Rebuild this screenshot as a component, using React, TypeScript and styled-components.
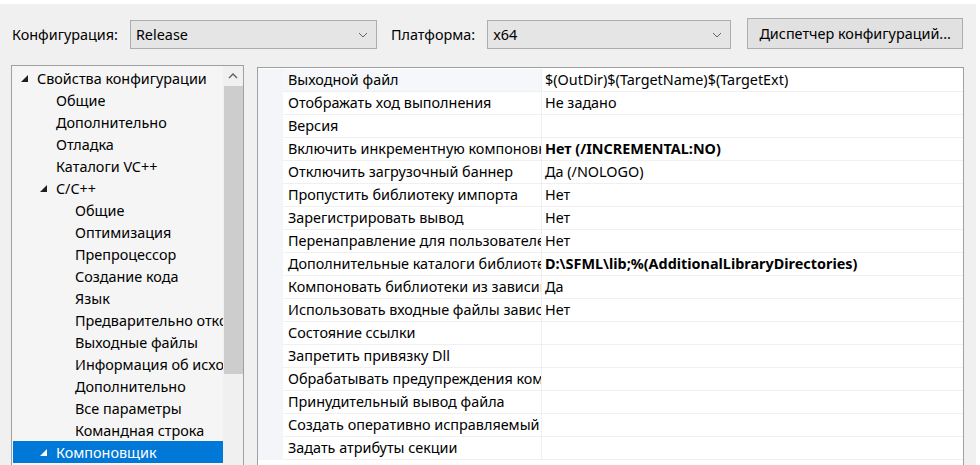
import styled, { createGlobalStyle } from "styled-components";

const GlobalStyle = createGlobalStyle`
  html, body {
    margin: 0;
    padding: 0;
    background: #ffffff;
    overflow: hidden;
  }
  body {
    font-family: "Noto Sans", "Open Sans", sans-serif;
    font-size: 14.4px;
    color: #000;
  }
`;

type TreeItem = { label: string; level: number; expanded?: boolean; selected?: boolean };

const treeItems: TreeItem[] = [
  { label: "Свойства конфигурации", level: 0, expanded: true },
  { label: "Общие", level: 1 },
  { label: "Дополнительно", level: 1 },
  { label: "Отладка", level: 1 },
  { label: "Каталоги VC++", level: 1 },
  { label: "C/C++", level: 1, expanded: true },
  { label: "Общие", level: 2 },
  { label: "Оптимизация", level: 2 },
  { label: "Препроцессор", level: 2 },
  { label: "Создание кода", level: 2 },
  { label: "Язык", level: 2 },
  { label: "Предварительно откомпилированные заголовки", level: 2 },
  { label: "Выходные файлы", level: 2 },
  { label: "Информация об исходных файлах", level: 2 },
  { label: "Дополнительно", level: 2 },
  { label: "Все параметры", level: 2 },
  { label: "Командная строка", level: 2 },
  { label: "Компоновщик", level: 1, expanded: true, selected: true },
];

type Prop = { name: string; value?: string; bold?: boolean };

const props: Prop[] = [
  { name: "Выходной файл", value: "$(OutDir)$(TargetName)$(TargetExt)" },
  { name: "Отображать ход выполнения", value: "Не задано" },
  { name: "Версия" },
  { name: "Включить инкрементную компоновку", value: "Нет (/INCREMENTAL:NO)", bold: true },
  { name: "Отключить загрузочный баннер", value: "Да (/NOLOGO)" },
  { name: "Пропустить библиотеку импорта", value: "Нет" },
  { name: "Зарегистрировать вывод", value: "Нет" },
  { name: "Перенаправление для пользователей", value: "Нет" },
  { name: "Дополнительные каталоги библиотек", value: "D:\\SFML\\lib;%(AdditionalLibraryDirectories)", bold: true },
  { name: "Компоновать библиотеки из зависимостей", value: "Да" },
  { name: "Использовать входные файлы зависимостей библиотек", value: "Нет" },
  { name: "Состояние ссылки" },
  { name: "Запретить привязку Dll" },
  { name: "Обрабатывать предупреждения компоновщика как ошибки" },
  { name: "Принудительный вывод файла" },
  { name: "Создать оперативно исправляемый образ" },
  { name: "Задать атрибуты секции" },
];

function Chevron() {
  return (
    <svg width="10" height="6" viewBox="0 0 10 6">
      <path d="M1 1 L5 5 L9 1" fill="none" stroke="#606060" strokeWidth="1" />
    </svg>
  );
}

function Expander({ color }: { color: string }) {
  return (
    <svg width="7" height="7" viewBox="0 0 7 7">
      <polygon points="7,0 7,7 0,7" fill={color} />
    </svg>
  );
}

export default function App() {
  return (
    <>
      <GlobalStyle />
      <Window>
        <Toolbar>
          <Label>Конфигурация:</Label>
          <Combo $width={247}>
            <span>Release</span>
            <Chevron />
          </Combo>
          <Label $gap={14}>Платформа:</Label>
          <Combo $width={244}>
            <span>x64</span>
            <Chevron />
          </Combo>
          <Button>Диспетчер конфигураций...</Button>
        </Toolbar>
        <Body>
          <TreePanel>
            <TreeList>
              {treeItems.map((item, i) => (
                <TreeRow key={i} $level={item.level} $selected={!!item.selected}>
                  <ExpanderSlot>
                    {item.expanded && <Expander color={item.selected ? "#ffffff" : "#1e1e1e"} />}
                  </ExpanderSlot>
                  <TreeText>{item.label}</TreeText>
                </TreeRow>
              ))}
            </TreeList>
            <ScrollBar>
              <ScrollArrow>
                <svg width="10" height="6" viewBox="0 0 10 6">
                  <path d="M1 5 L5 1 L9 5" fill="none" stroke="#606060" strokeWidth="1.4" />
                </svg>
              </ScrollArrow>
              <Thumb />
            </ScrollBar>
          </TreePanel>
          <GridPanel>
            <Grid>
              {props.map((p, i) => (
                <GridRow key={i}>
                  <Margin />
                  <NameCell $active={i === 0}>{p.name}</NameCell>
                  <ValueCell $bold={!!p.bold}>{p.value ?? ""}</ValueCell>
                </GridRow>
              ))}
            </Grid>
          </GridPanel>
        </Body>
      </Window>
    </>
  );
}

const Window = styled.div`
  margin-top: 4px;
  width: 976px;
  height: 461px;
  background: #f0f0f0;
  display: flex;
  flex-direction: column;
  overflow: hidden;
`;

const Toolbar = styled.div`
  height: 61px;
  display: flex;
  align-items: center;
  padding-left: 12px;
  box-sizing: border-box;
`;

const Label = styled.span<{ $gap?: number }>`
  margin-left: ${({ $gap }) => $gap ?? 0}px;
  margin-right: 12px;
  white-space: nowrap;
`;

const Combo = styled.div<{ $width: number }>`
  width: ${({ $width }) => $width}px;
  height: 29px;
  box-sizing: border-box;
  border: 1px solid #adadad;
  background: #e5e5e5;
  display: flex;
  align-items: center;
  justify-content: space-between;
  padding: 0 8px 0 5px;
  flex-shrink: 0;
`;

const Button = styled.div`
  margin-left: 16px;
  width: 216px;
  height: 31px;
  margin-top: -2px;
  box-sizing: border-box;
  border: 1px solid #adadad;
  background: #e1e1e1;
  display: flex;
  align-items: center;
  justify-content: center;
  white-space: nowrap;
  flex-shrink: 0;
`;

const Body = styled.div`
  flex: 1;
  display: flex;
  align-items: flex-start;
  padding-left: 11px;
  gap: 13px;
  min-height: 0;
`;

const TreePanel = styled.div`
  width: 233px;
  height: 420px;
  box-sizing: border-box;
  border: 1px solid #a0a0a0;
  background: #f5f5f5;
  display: flex;
`;

const TreeList = styled.div`
  width: 210px;
  overflow: hidden;
  padding-top: 1px;
  padding-left: 1px;
`;

const TreeRow = styled.div<{ $level: number; $selected: boolean }>`
  height: 22px;
  display: flex;
  align-items: center;
  padding-left: ${({ $level }) => 8 + $level * 19}px;
  background: ${({ $selected }) => ($selected ? "#0078d7" : "transparent")};
  color: ${({ $selected }) => ($selected ? "#ffffff" : "#000000")};
  white-space: nowrap;
`;

const ExpanderSlot = styled.span`
  width: 16px;
  display: flex;
  align-items: center;
  flex-shrink: 0;
  padding-top: 1px;
`;

const TreeText = styled.span`
  white-space: nowrap;
`;

const ScrollBar = styled.div`
  width: 20px;
  margin-left: auto;
  display: flex;
  flex-direction: column;
  align-items: center;
  background: #f0f0f0;
`;

const ScrollArrow = styled.div`
  height: 20px;
  width: 20px;
  display: flex;
  align-items: center;
  justify-content: center;
`;

const Thumb = styled.div`
  width: 19px;
  height: 288px;
  background: #cdcdcd;
`;

const GridPanel = styled.div`
  width: 707px;
  height: 420px;
  margin-top: 2px;
  box-sizing: border-box;
  border: 1px solid #a0a0a0;
  background: #ffffff;
  padding-top: 1px;
`;

const Grid = styled.div`
  display: flex;
  flex-direction: column;
`;

const GridRow = styled.div`
  height: 23px;
  display: grid;
  grid-template-columns: 25px 259px 1fr;
`;

const Margin = styled.div`
  background: #f3f5f9;
`;

const NameCell = styled.div<{ $active: boolean }>`
  background: ${({ $active }) => ($active ? "#f5f7fa" : "#ffffff")};
  border-bottom: 1px solid #f0f0f0;
  border-right: 1px solid #f0f0f0;
  padding-left: 5px;
  line-height: 22px;
  white-space: nowrap;
  overflow: hidden;
`;

const ValueCell = styled.div<{ $bold: boolean }>`
  border-bottom: 1px solid #f0f0f0;
  padding-left: 3px;
  line-height: 22px;
  font-weight: ${({ $bold }) => ($bold ? 700 : 400)};
  white-space: nowrap;
  overflow: hidden;
`;
